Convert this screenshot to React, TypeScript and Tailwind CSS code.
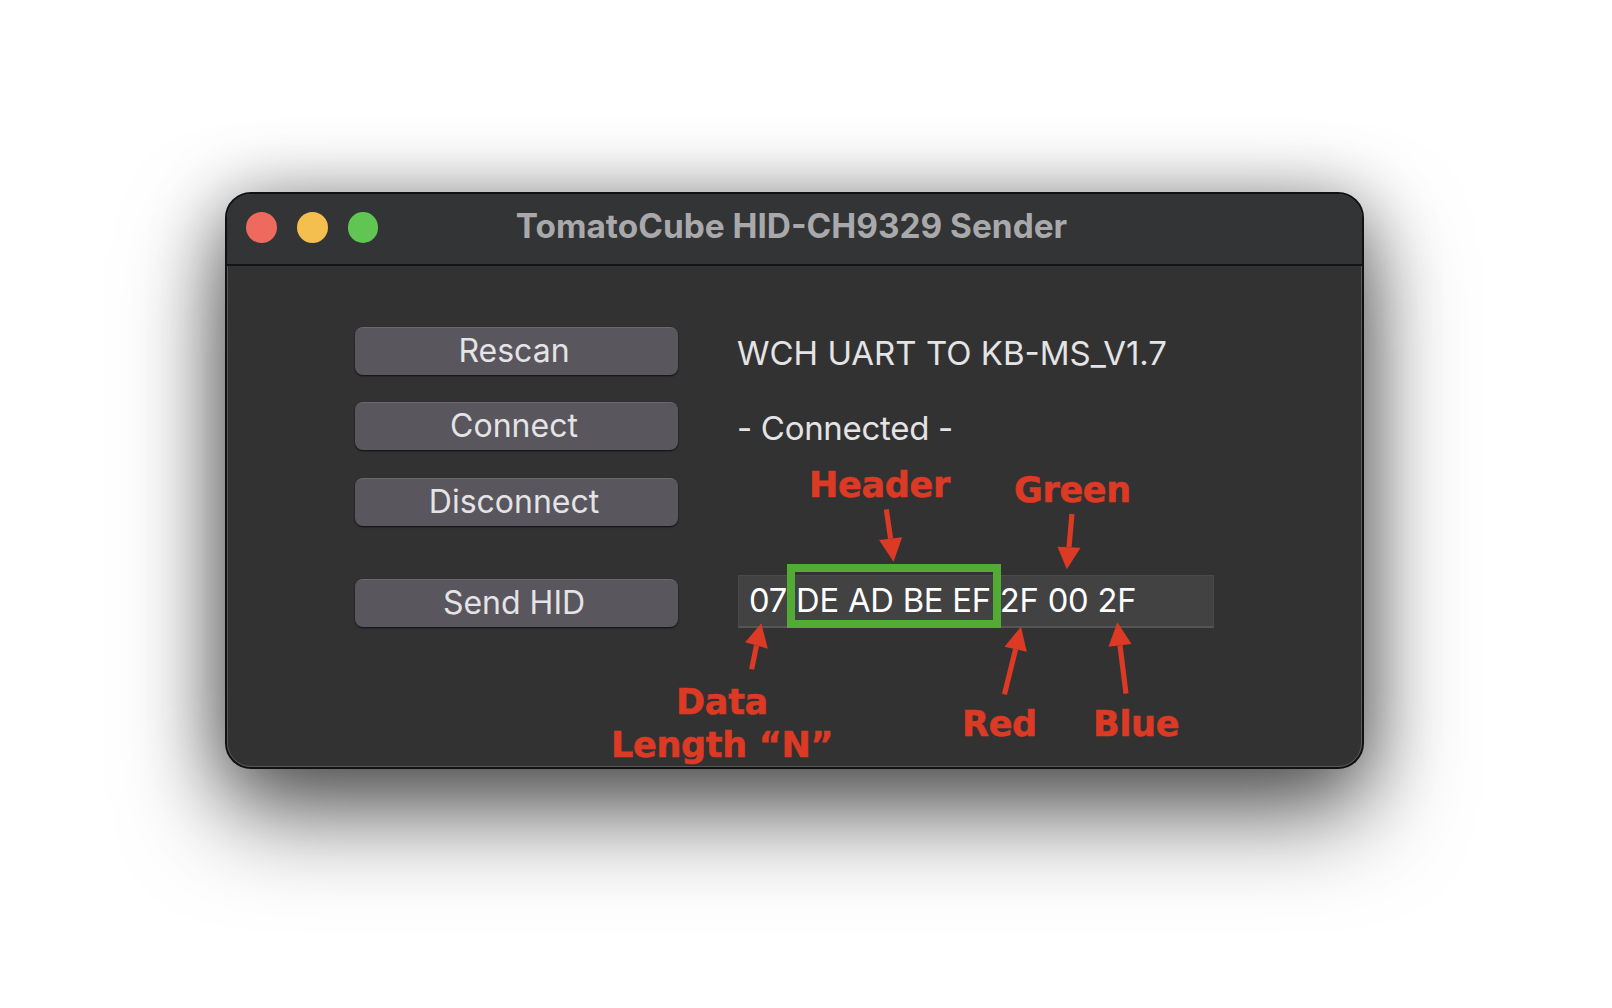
import React from "react";

const sans = "font-['Inter','Liberation_Sans',sans-serif]";

function Btn({ label }: { label: string }) {
  return (
    <button className="w-[323px] h-[48px] shrink-0 rounded-[8px] bg-[#59565e] border-t border-t-[#6b686f] shadow-[0_1px_2px_rgba(0,0,0,0.7)] text-[#e4e3e5] text-[32px] leading-[44px] pr-[5px] pb-[2px] text-center">
      {label}
    </button>
  );
}

function Note({ className, children }: { className: string; children: React.ReactNode }) {
  return (
    <div className={`absolute font-['DejaVu_Sans',sans-serif] font-bold text-[#dc3a24] text-[35px] leading-[43px] whitespace-nowrap tracking-[-0.3px] [-webkit-text-stroke:0.6px_#dc3a24] ${className}`}>
      {children}
    </div>
  );
}

function Arrow({ tail, tip, b1, b2 }: { tail: [number, number]; tip: [number, number]; b1: [number, number]; b2: [number, number] }) {
  return (
    <g fill="#dc3a24" stroke="none">
      <line x1={tail[0]} y1={tail[1]} x2={(b1[0] + b2[0]) / 2} y2={(b1[1] + b2[1]) / 2} stroke="#dc3a24" strokeWidth={15} />
      <polygon points={`${tip[0]},${tip[1]} ${b1[0]},${b1[1]} ${b2[0]},${b2[1]}`} />
    </g>
  );
}

export default function App() {
  return (
    <div className={`w-[1612px] h-[1008px] overflow-hidden bg-white pt-[192px] pl-[225px] ${sans}`}>
      <div className="relative w-[1139px] h-[577px] rounded-[26px] bg-[#323232] border-2 border-[#111113] outline outline-1 outline-[#58585a] -outline-offset-[3px] shadow-[0_45px_100px_rgba(0,0,0,0.58),0_8px_70px_rgba(0,0,0,0.38)]">
        <div className="relative flex items-center h-[72px] pb-[4px] border-b-2 border-b-[#141416] bg-[#333436] rounded-t-[24px] pl-[19px] gap-[20px]">
          <div className="w-[31px] h-[31px] rounded-full bg-[#ee6a5f]" />
          <div className="w-[31px] h-[31px] rounded-full bg-[#f5bf4f]" />
          <div className="w-[30px] h-[31px] rounded-full bg-[#61c554]" />
          <div className="absolute left-0 right-0 top-[12px] text-center text-[#a9a9ab] text-[33.4px] leading-[40px] font-bold whitespace-nowrap">
            <span className="relative -left-[3px]">TomatoCube HID-CH9329 Sender</span>
          </div>
        </div>

        <div className="flex flex-col pl-[128px] pt-[61px]">
          <div className="flex items-center h-[48px] mb-[27px]">
            <Btn label="Rescan" />
            <div className="ml-[59px] mt-[5px] text-[#e4e3e5] text-[33px] whitespace-nowrap">WCH UART TO KB-MS_V1.7</div>
          </div>
          <div className="flex items-center h-[48px] mb-[28px]">
            <Btn label="Connect" />
            <div className="ml-[59px] mt-[6px] text-[#e4e3e5] text-[33px] tracking-[-0.3px] whitespace-nowrap">- Connected -</div>
          </div>
          <div className="flex items-center h-[48px] mb-[53px]">
            <Btn label="Disconnect" />
          </div>
          <div className="flex items-end h-[48px]">
            <Btn label="Send HID" />
            <div className="ml-[60px] w-[476px] h-[53px] shrink-0 -mb-[1px] bg-[#424242] border border-[#4a4a4a] border-b-2 border-b-[#555555] flex items-center pl-[10px] text-white text-[32.7px] whitespace-pre tracking-[-0.2px]">
              07 DE AD BE EF 2F 00 2F
            </div>
          </div>
        </div>

        <div className="absolute left-[560px] top-[370px] w-[214px] h-[64px] border-[8px] border-[#52ab34]" />

        <svg className="absolute left-[473px] top-[256px]" width="540" height="320" viewBox="0 0 1568 960" preserveAspectRatio="none">
          <Arrow tail={[541, 178]} tip={[562, 335]} b1={[520, 270]} b2={[587, 262]} />
          <Arrow tail={[1080, 192]} tip={[1065, 358]} b1={[1038, 290]} b2={[1105, 293]} />
          <Arrow tail={[150, 658]} tip={[178, 520]} b1={[131, 577]} b2={[197, 596]} />
          <Arrow tail={[884, 733]} tip={[932, 530]} b1={[884, 590]} b2={[949, 605]} />
          <Arrow tail={[1237, 731]} tip={[1212, 517]} b1={[1186, 590]} b2={[1253, 582]} />
        </svg>

        <Note className="left-[582px] top-[270px]">Header</Note>
        <Note className="left-[787px] top-[275px]">Green</Note>
        <Note className="left-[735px] top-[509px]">Red</Note>
        <Note className="left-[866px] top-[509px]">Blue</Note>
        <Note className="left-[384px] top-[487px] w-[222px] text-center">
          Data<br />Length “N”
        </Note>
      </div>
    </div>
  );
}
